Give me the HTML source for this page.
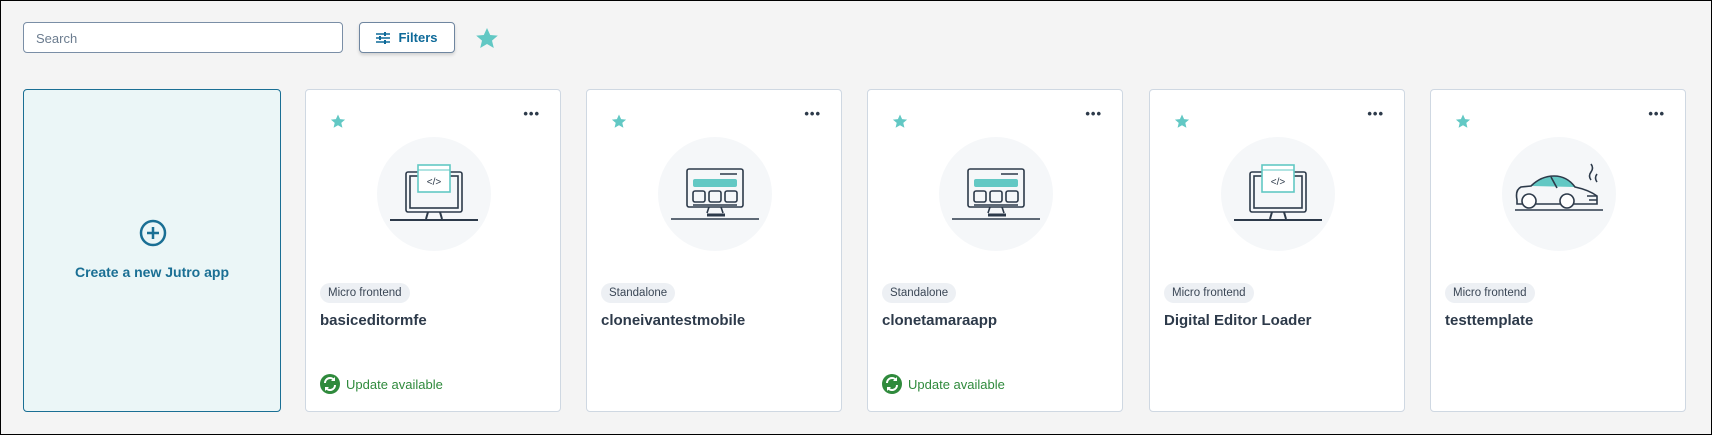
<!DOCTYPE html>
<html><head><meta charset="utf-8"><style>
*{box-sizing:border-box;margin:0;padding:0}
body{width:1712px;height:435px;background:#f4f4f4;font-family:"Liberation Sans",sans-serif;position:relative;overflow:hidden;border:1px solid #000}
.search{position:absolute;left:22px;top:21px;width:320px;height:31px;border:1px solid #7a8ea6;border-radius:4px;background:#fff;font-size:13px;color:#6b7c8f;padding:8px 12px}
.filters{position:absolute;left:358px;top:21px;width:96px;height:31px;border:1px solid #6f86a0;border-radius:4px;background:#fff;box-shadow:0 2px 3px rgba(0,0,0,.15);color:#0e6a99;font-weight:bold;font-size:13px;display:flex;align-items:center;justify-content:center;gap:8px}
.card{position:absolute;top:88px;width:256px;height:323px;background:#fff;border:1px solid #cfd8e2;border-radius:4px}
.create{left:22px;width:258px;background:#ebf6f7;border:1px solid #1a6f94}
.create .t{position:absolute;top:174px;width:100%;text-align:center;color:#1a6f94;font-weight:bold;font-size:14px}
.star{position:absolute;left:24px;top:24px}
.dots{position:absolute;right:20px;top:16px;font-size:13px;letter-spacing:1px;font-weight:bold;color:#2d3a4a}
.circ{position:absolute;left:71px;top:47px;width:114px;height:114px;border-radius:50%;background:#f5f7f9}
.tag{position:absolute;left:14px;top:193px;height:20px;padding:0 8px;border-radius:10px;background:#edf0f4;font-size:11.5px;color:#3b4756;line-height:20px}
.title{position:absolute;left:14px;top:222px;font-size:15px;font-weight:bold;color:#2d3a4a}
.upd{position:absolute;left:14px;top:284px;display:flex;align-items:center;gap:6px;color:#2f8a3c;font-size:13px}
</style></head><body>
<div class="search">Search</div>
<div class="filters"><svg width="14" height="12" viewBox="0 0 14 12" stroke="#0e6a99" stroke-width="1.6"><path d="M0 2H14M0 6H14M0 10H14"/><path d="M9 0V4M4 4V8M9 8V12" stroke-width="2"/></svg>Filters</div>
<svg style="position:absolute;left:474px;top:26px" width="24" height="23" viewBox="0 0 24 23"><path d="M12 1l3.2 7 7.6.6-5.8 5 1.8 7.4L12 17l-6.8 4 1.8-7.4-5.8-5 7.6-.6z" fill="#62c8c4"/></svg>

<div class="card create">
<svg style="position:absolute;left:115px;top:129px" width="28" height="28" viewBox="0 0 28 28" fill="none" stroke="#1a6f94" stroke-width="2.5"><circle cx="14" cy="14" r="12"/><path d="M14 8V20M8 14H20"/></svg>
<div class="t">Create a new Jutro app</div></div>

<svg width="0" height="0" style="position:absolute">
<defs>
<symbol id="st" viewBox="0 0 16 15"><path d="M8 .5l2.1 4.6 5 .5-3.8 3.3 1.1 4.9L8 11.2l-4.4 2.6 1.1-4.9L.9 5.6l5-.5z" fill="#62c8c4"/></symbol>
<symbol id="code" viewBox="-57 -57 114 114"><g fill="none" stroke="#2d3a4a" stroke-width="1.6"><rect x="-28" y="-22" width="56" height="40" rx="2"/><rect x="-24" y="-18" width="48" height="32"/><path d="M-6 18l-2 7M6 18l2 7M-44 26H44" stroke-width="2"/></g><rect x="-16" y="-29" width="32" height="27" fill="#fff" stroke="#62c8c4" stroke-width="1.6"/><path d="M-16 -24H16" stroke="#62c8c4"/><text x="0" y="-9" font-size="10" text-anchor="middle" fill="#2d3a4a" font-family="Liberation Sans">&lt;/&gt;</text></symbol>
<symbol id="web" viewBox="-57 -57 114 114"><g fill="none" stroke="#2d3a4a" stroke-width="1.6"><rect x="-28" y="-25" width="56" height="38" rx="2"/><rect x="-22" y="-3" width="12" height="11" rx="2"/><rect x="-6" y="-3" width="12" height="11" rx="2"/><rect x="10" y="-3" width="12" height="11" rx="2"/><path d="M-22 11H22M-6 13l-2 6M6 13l2 6M-44 25H44M5 -20H22" /><path d="M-8 21H10" stroke-width="3"/></g><rect x="-22" y="-15" width="44" height="8" rx="2" fill="#62c8c4"/></symbol>
<symbol id="car" viewBox="-57 -57 114 114"><path d="M-28 -8Q-18 -18 -5 -18Q8 -18 16 -7Z" fill="#62c8c4"/><g fill="none" stroke="#2d3a4a" stroke-width="1.6"><path d="M-42 6Q-44 -4 -38 -7L-28 -8Q-18 -18 -5 -18Q8 -18 16 -7Q30 -4 38 2V10H-42Z"/><circle cx="-30" cy="7" r="7" fill="#fff"/><circle cx="8" cy="7" r="7" fill="#fff"/><path d="M-44 16H44M-8 -17L-2 -6M28 2H38M30 6H38M32 -14q-3 -4 0 -8q3 -4 0 -8M38 -12q-3 -4 0 -8"/></g></symbol>
<symbol id="up" viewBox="0 0 20 20"><circle cx="10" cy="10" r="10" fill="#2f8a3c"/><path d="M5 9a5 5 0 0 1 9-3M15 11a5 5 0 0 1-9 3" stroke="#fff" stroke-width="2" fill="none"/><path d="M15 3v4h-4zM5 17v-4h4z" fill="#fff"/></symbol>
</defs></svg>

<div class="card" style="left:304px"><svg class="star" width="16" height="15"><use href="#st"/></svg><div class="dots">•••</div><div class="circ"><svg width="114" height="114"><use href="#code"/></svg></div><div class="tag">Micro frontend</div><div class="title">basiceditormfe</div><div class="upd"><svg width="20" height="20"><use href="#up"/></svg>Update available</div></div>
<div class="card" style="left:585px"><svg class="star" width="16" height="15"><use href="#st"/></svg><div class="dots">•••</div><div class="circ"><svg width="114" height="114"><use href="#web"/></svg></div><div class="tag">Standalone</div><div class="title">cloneivantestmobile</div></div>
<div class="card" style="left:866px"><svg class="star" width="16" height="15"><use href="#st"/></svg><div class="dots">•••</div><div class="circ"><svg width="114" height="114"><use href="#web"/></svg></div><div class="tag">Standalone</div><div class="title">clonetamaraapp</div><div class="upd"><svg width="20" height="20"><use href="#up"/></svg>Update available</div></div>
<div class="card" style="left:1148px"><svg class="star" width="16" height="15"><use href="#st"/></svg><div class="dots">•••</div><div class="circ"><svg width="114" height="114"><use href="#code"/></svg></div><div class="tag">Micro frontend</div><div class="title">Digital Editor Loader</div></div>
<div class="card" style="left:1429px"><svg class="star" width="16" height="15"><use href="#st"/></svg><div class="dots">•••</div><div class="circ"><svg width="114" height="114"><use href="#car"/></svg></div><div class="tag">Micro frontend</div><div class="title">testtemplate</div></div>
</body></html>
